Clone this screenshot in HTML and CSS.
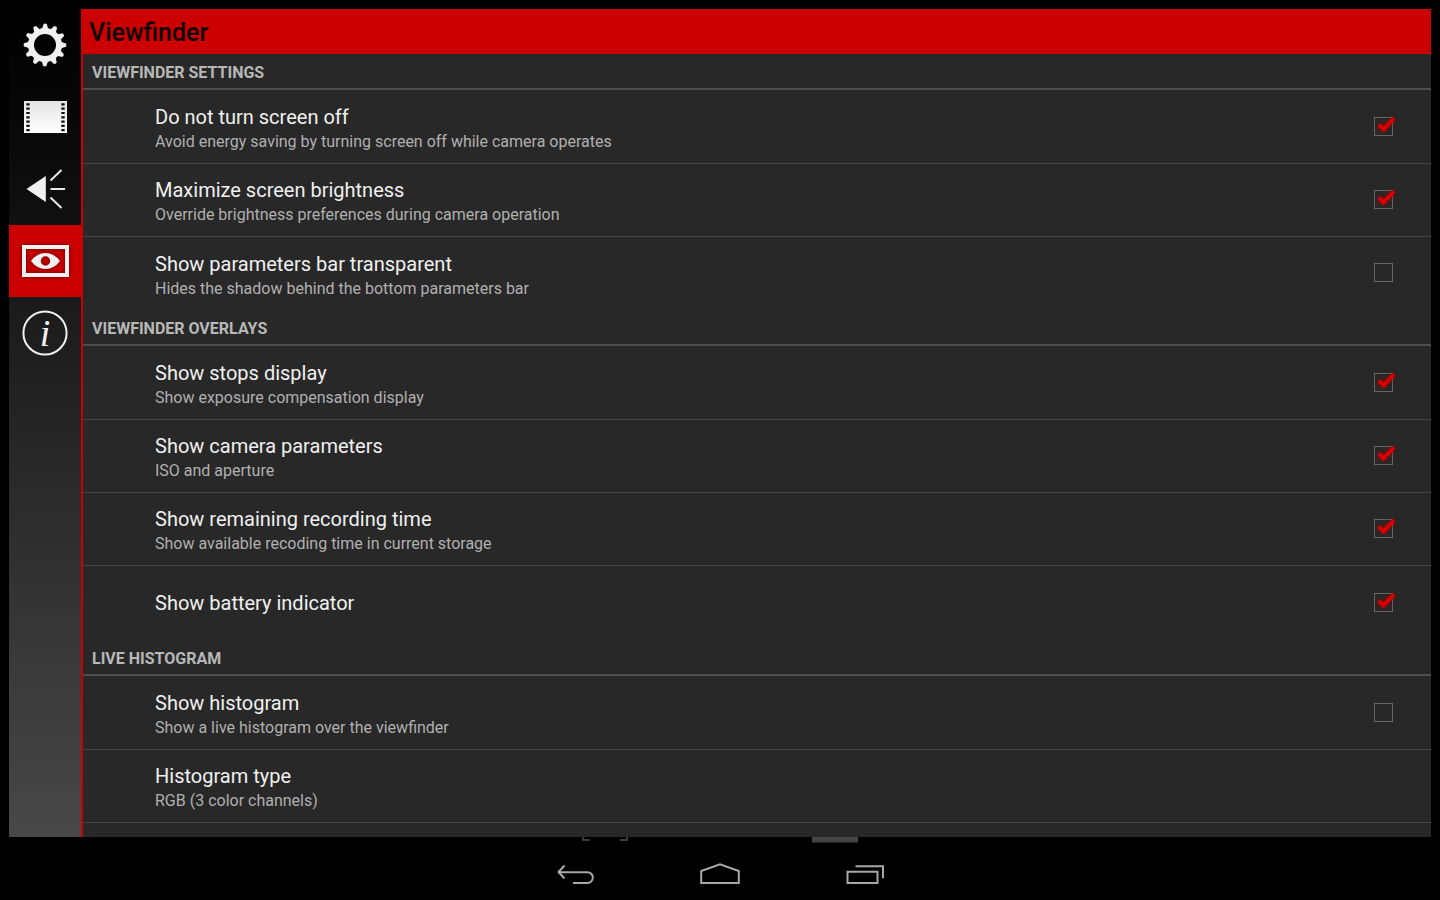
FILE: index.html
```html
<!DOCTYPE html>
<html lang="en">
<head>
<meta charset="utf-8">
<meta name="viewport" content="width=device-width, initial-scale=1">
<title>Viewfinder</title>
<link rel="stylesheet" href="styles.css">
</head>
<body>
<svg class="defs" aria-hidden="true">
  <defs>
    <linearGradient id="silver" x1="0" y1="0" x2="0" y2="1"><stop offset="0" stop-color="#e4e4e4"/><stop offset="1" stop-color="#fff"/></linearGradient>
    <path id="tooth" d="M32.8 20.500 34.600 15Q36.200 14.200 37.800 15L39.400 20.500Z"/>
    <path id="tick" d="M3.500 9 6 6.300 9.500 9.600 18.600.2 21.300 2.800 9.500 15.300Z"/>
  </defs>
</svg>
<div class="screen">
  <div class="window">
    <nav class="tabs" aria-label="Settings categories">
      <button class="tab" type="button" aria-label="General">
        <svg viewBox="0 0 72 72" fill="#f0f0f0">
          <circle cx="36" cy="36" r="14" fill="none" stroke="#f0f0f0" stroke-width="6"/>
          <use href="#tooth"/><use href="#tooth" transform="rotate(30 36 36)"/><use href="#tooth" transform="rotate(60 36 36)"/><use href="#tooth" transform="rotate(90 36 36)"/><use href="#tooth" transform="rotate(120 36 36)"/><use href="#tooth" transform="rotate(150 36 36)"/><use href="#tooth" transform="rotate(180 36 36)"/><use href="#tooth" transform="rotate(210 36 36)"/><use href="#tooth" transform="rotate(240 36 36)"/><use href="#tooth" transform="rotate(270 36 36)"/><use href="#tooth" transform="rotate(300 36 36)"/><use href="#tooth" transform="rotate(330 36 36)"/>
        </svg>
      </button>
      <button class="tab" type="button" aria-label="Video">
        <svg viewBox="0 0 72 72">
          <path fill="url(#silver)" d="M15 20h43v32H15z"/>
          <path fill="none" stroke="#111" stroke-width="3.4" stroke-dasharray="2.2 2.1" d="M19 22.3v28.4M54 22.3v28.4"/>
        </svg>
      </button>
      <button class="tab" type="button" aria-label="Sound">
        <svg viewBox="0 0 72 72">
          <path fill="#f0f0f0" d="M17.5 36 36.8 23v26z"/>
          <path fill="none" stroke="#e8e8e8" stroke-width="2" d="M41.5 27.5 52.5 17M41.5 36H56M41.5 44.5 52.5 55"/>
        </svg>
      </button>
      <button class="tab tab-active" type="button" aria-label="Viewfinder" aria-current="page">
        <svg viewBox="0 0 72 72">
          <path fill="none" stroke="#f0f0f0" stroke-width="4" d="M15 22h43v28H15z"/>
          <path fill="#f0f0f0" fill-rule="evenodd" d="M22 36Q28 28 36.5 28T51 36Q45 44 36.5 44T22 36ZM36.5 31.3a4.7 4.7 0 1 0 0 9.4 4.7 4.7 0 0 0 0-9.4Z"/>
        </svg>
      </button>
      <button class="tab" type="button" aria-label="About">
        <svg viewBox="0 0 72 72">
          <circle cx="36" cy="36" r="21.6" fill="none" stroke="#f0f0f0" stroke-width="2"/>
          <text class="info" x="36" y="49" text-anchor="middle">i</text>
        </svg>
      </button>
    </nav>
    <main class="panel">
      <h1 class="title">Viewfinder</h1>

      <section>
        <h2 class="heading">Viewfinder settings</h2>
        <div class="rows">
          <label class="row"><span class="text"><span class="name">Do not turn screen off</span><span class="summary">Avoid energy saving by turning screen off while camera operates</span></span><span class="check"><input type="checkbox" checked><svg viewBox="0 0 19 19"><use href="#tick"/></svg></span></label>
          <label class="row"><span class="text"><span class="name">Maximize screen brightness</span><span class="summary">Override brightness preferences during camera operation</span></span><span class="check"><input type="checkbox" checked><svg viewBox="0 0 19 19"><use href="#tick"/></svg></span></label>
          <label class="row"><span class="text"><span class="name">Show parameters bar transparent</span><span class="summary">Hides the shadow behind the bottom parameters bar</span></span><span class="check"><input type="checkbox"><svg viewBox="0 0 19 19"><use href="#tick"/></svg></span></label>
        </div>
      </section>

      <section>
        <h2 class="heading">Viewfinder overlays</h2>
        <div class="rows">
          <label class="row"><span class="text"><span class="name">Show stops display</span><span class="summary">Show exposure compensation display</span></span><span class="check"><input type="checkbox" checked><svg viewBox="0 0 19 19"><use href="#tick"/></svg></span></label>
          <label class="row"><span class="text"><span class="name">Show camera parameters</span><span class="summary">ISO and aperture</span></span><span class="check"><input type="checkbox" checked><svg viewBox="0 0 19 19"><use href="#tick"/></svg></span></label>
          <label class="row"><span class="text"><span class="name">Show remaining recording time</span><span class="summary">Show available recoding time in current storage</span></span><span class="check"><input type="checkbox" checked><svg viewBox="0 0 19 19"><use href="#tick"/></svg></span></label>
          <label class="row row-single"><span class="text"><span class="name">Show battery indicator</span></span><span class="check"><input type="checkbox" checked><svg viewBox="0 0 19 19"><use href="#tick"/></svg></span></label>
        </div>
      </section>

      <section>
        <h2 class="heading">Live histogram</h2>
        <div class="rows">
          <label class="row"><span class="text"><span class="name">Show histogram</span><span class="summary">Show a live histogram over the viewfinder</span></span><span class="check"><input type="checkbox"><svg viewBox="0 0 19 19"><use href="#tick"/></svg></span></label>
          <button class="row" type="button"><span class="text"><span class="name">Histogram type</span><span class="summary">RGB (3 color channels)</span></span></button>
          <div class="row"></div>
        </div>
      </section>
    </main>
  </div>
  <footer class="system">
    <svg class="behind" viewBox="0 0 280 6" aria-hidden="true">
      <path fill="none" stroke="#3c3c3c" stroke-width="2" d="M3 0v3h7M47 0v3h-7"/>
      <path fill="#444" d="M232 0h46v5.500h-46z"/>
    </svg>
    <button class="key" type="button" aria-label="Back"><svg viewBox="0 0 40 24"><path d="M9.500 4.500 3.500 11l6 6.500M4 11.200h28.500a5.300 5.300 0 0 1 0 10.700H18"/></svg></button>
    <button class="key" type="button" aria-label="Home"><svg viewBox="0 0 40 24"><path d="M1.200 21.900V10L20 3.200 38.800 10v11.900z"/></svg></button>
    <button class="key" type="button" aria-label="Recent apps"><svg viewBox="0 0 40 24"><path d="M2.500 10.800h30v11.100h-30zM10.500 5.300h27.500v12"/></svg></button>
  </footer>
</div>
</body>
</html>
```

FILE: styles.css
```css
* { box-sizing: border-box; }

body {
  margin: 0;
  background: #000;
  color: #f0f0f0;
  font-family: Roboto, "Open Sans", sans-serif;
}

button {
  margin: 0;
  padding: 0;
  border: 0;
  background: none;
  color: inherit;
  font: inherit;
  text-align: left;
}

.defs {
  position: absolute;
  width: 0;
  height: 0;
}

.screen {
  display: flex;
  flex-direction: column;
  height: 100vh;
}

.window {
  display: flex;
  flex: 1;
  min-height: 0;
  margin: 9px 9px 0;
}

.tabs {
  flex: none;
  width: 72px;
  background: linear-gradient(#000, #0d0d0d 22%, #1a1a1a 35%, #484848);
}

.tab { display: block; width: 72px; height: 72px; }
.tab svg { display: block; }
.tab-active { background: #cc0000; }
.tab-active svg { filter: drop-shadow(0 0 2px #600); }
.info { fill: #f0f0f0; font: italic 38px "Liberation Serif", serif; }

.panel {
  flex: 1;
  min-width: 0;
  overflow: hidden;
  border-left: 2px solid #cc0000;
  background: #282828;
}

.title {
  margin: 0 0 0 -2px;
  padding: 2px 8px 0;
  background: #cc0000;
  color: #0c0000;
  font-size: 25px;
  font-weight: 500;
  line-height: 43px;
}

.heading {
  margin: 0;
  padding: 3px 9px 0;
  border-bottom: 2px solid #4e4e4e;
  color: #b8b8b8;
  font-size: 16px;
  font-weight: 700;
  line-height: 31px;
  text-transform: uppercase;
}

.rows { padding-top: 1px; }

.row {
  display: flex;
  align-items: center;
  width: 100%;
  min-height: 73px;
  padding: 0 38px 0 72px;
  border-bottom: 1px solid #464646;
}

.row:last-child { border-bottom: 0; }
.row-single { min-height: 74px; }

.text { display: flex; flex: 1; flex-direction: column; padding-top: 2px; }
.name { font-size: 20px; line-height: 28px; }
.summary { color: #b0b0b0; font-size: 16px; line-height: 22px; }
.row-single .text { padding-top: 0; }

.check {
  position: relative;
  flex: none;
  width: 19px;
  height: 19px;
  margin-bottom: 2px;
}

.check input {
  display: block;
  width: 19px;
  height: 19px;
  margin: 0;
  border: 1px solid #666;
  appearance: none;
}

.check svg {
  position: absolute;
  inset: 0;
  display: none;
  overflow: visible;
  fill: #dc0000;
  filter: drop-shadow(0 0 2px #900);
  pointer-events: none;
}

.check input:checked + svg { display: block; }

.system {
  position: relative;
  display: flex;
  flex: none;
  justify-content: center;
  gap: 105px;
  height: 63px;
  padding-top: 24px;
}

.behind {
  position: absolute;
  top: 0;
  left: calc(50% - 140px);
  width: 280px;
  height: 6px;
}

.key { width: 40px; height: 24px; }

.key svg {
  display: block;
  fill: none;
  stroke: #a8a8a8;
  stroke-width: 2;
}
```
